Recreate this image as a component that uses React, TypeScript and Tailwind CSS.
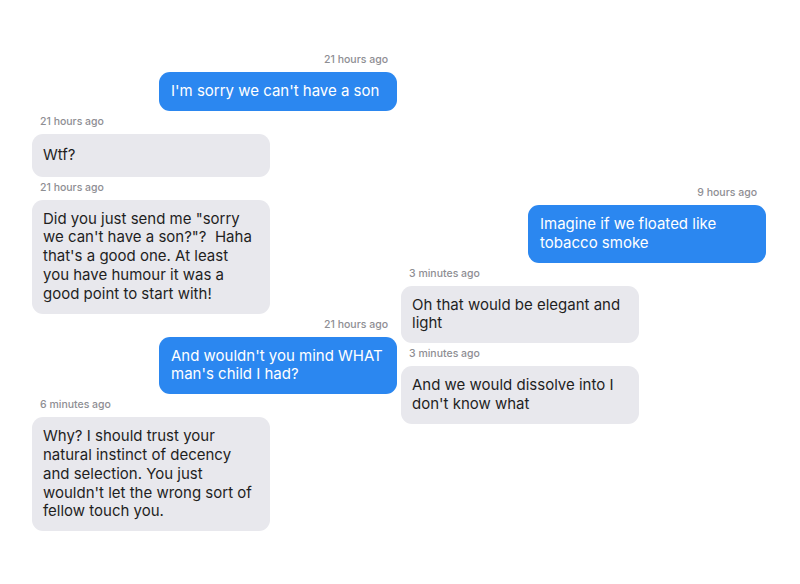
type Msg = {
  time: string;
  mine: boolean;
  lines: string[];
  tall?: boolean;
};

const LEFT: Msg[] = [
  { time: "21 hours ago", mine: true, lines: ["I'm sorry we can't have a son"] },
  { time: "21 hours ago", mine: false, lines: ["Wtf?"], tall: true },
  {
    time: "21 hours ago",
    mine: false,
    lines: [
      'Did you just send me "sorry',
      'we can\'t have a son?"?\u00a0 Haha',
      "that's a good one. At least",
      "you have humour it was a",
      "good point to start with!",
    ],
  },
  { time: "21 hours ago", mine: true, lines: ["And wouldn't you mind WHAT", "man's child I had?"] },
  {
    time: "6 minutes ago",
    mine: false,
    lines: [
      "Why? I should trust your",
      "natural instinct of decency",
      "and selection. You just",
      "wouldn't let the wrong sort of",
      "fellow touch you.",
    ],
  },
];

const RIGHT: Msg[] = [
  { time: "9 hours ago", mine: true, lines: ["Imagine if we floated like", "tobacco smoke"] },
  { time: "3 minutes ago", mine: false, lines: ["Oh that would be elegant and", "light"] },
  { time: "3 minutes ago", mine: false, lines: ["And we would dissolve into I", "don't know what"] },
];

function Bubble({ m }: { m: Msg }) {
  return (
    <div className={`flex flex-col mb-[5px] ${m.mine ? "items-end" : "items-start"}`}>
      <span
        className={`text-[10.5px] leading-[12px] font-medium text-[#8e8e93] ${m.mine ? "pr-[9px]" : "pl-[8px]"}`}
      >
        {m.time}
      </span>
      <div
        className={`mt-[6px] w-[238px] rounded-[11px] px-[12px] text-[15px] leading-[18.8px] whitespace-nowrap ${
          m.tall ? "py-[12px]" : "py-[10px]"
        } ${m.mine ? "bg-[#2b87f0] text-white" : "bg-[#e8e8ed] text-[#1f1f1f] pl-[11px]"}`}
      >
        {m.lines.map((l, i) => (
          <div key={i}>{l}</div>
        ))}
      </div>
    </div>
  );
}

export default function App() {
  return (
    <div
      className="w-[800px] h-[584px] bg-white flex gap-[4px] pl-[32px] overflow-hidden"
      style={{ fontFamily: "Inter, 'Open Sans', sans-serif" }}
    >
      <div className="w-[365px] flex flex-col pt-[54px]">
        {LEFT.map((m, i) => (
          <Bubble key={i} m={m} />
        ))}
      </div>
      <div className="w-[365px] flex flex-col pt-[187px]">
        {RIGHT.map((m, i) => (
          <Bubble key={i} m={m} />
        ))}
      </div>
    </div>
  );
}
